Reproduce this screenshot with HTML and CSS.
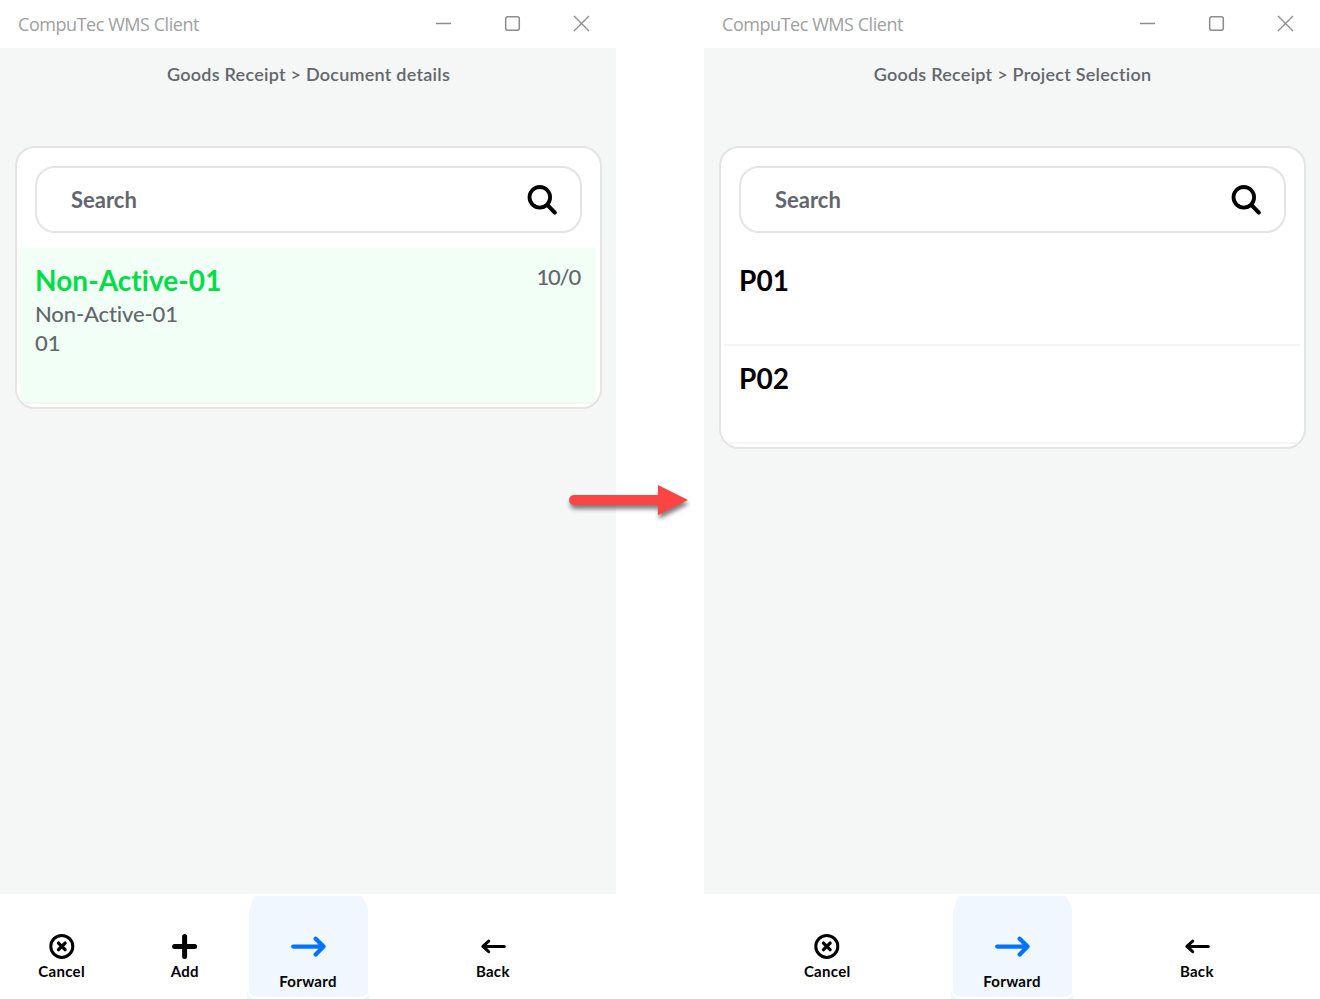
FILE: index.html
```html
<!DOCTYPE html>
<html lang="en">
<head>
<meta charset="utf-8">
<title>CompuTec WMS Client</title>
<link rel="stylesheet" href="styles.css">
</head>
<body>
<svg class="defs" width="0" height="0">
  <symbol id="controls" viewBox="0 0 160 20">
    <g fill="none" stroke="#8c8c8c" stroke-width="1.5"><path d="M1 11.5H16"/><rect x="70.7" y="4.7" width="13.6" height="13.6" rx="2"/><path d="M139 4L154 19M154 4L139 19" stroke-width="1.3"/></g>
  </symbol>
  <symbol id="search" viewBox="0 0 30 30">
    <g fill="none" stroke="#000" stroke-linecap="round"><circle cx="12.8" cy="12.3" r="10.3" stroke-width="3.8"/><path d="M20.8 20.3L27.8 27.6" stroke-width="4"/></g>
  </symbol>
  <symbol id="cancel" viewBox="0 0 26 26">
    <g fill="none" stroke="#000"><circle cx="12.8" cy="13.4" r="11" stroke-width="3"/><path d="M9.5 10.1L16.1 16.7M16.1 10.1L9.5 16.7" stroke-width="3.3" stroke-linecap="round"/></g>
  </symbol>
  <symbol id="add" viewBox="0 0 26 26"><path d="M12.6 3.4V23.4M2.6 13.4H22.6" stroke="#000" stroke-width="5" stroke-linecap="round"/></symbol>
  <symbol id="back" viewBox="0 0 26 26"><path d="M24.3 13.4H3.3M8.7 8.1L2.9 13.4L8.7 18.7" fill="none" stroke="#000" stroke-width="3" stroke-linecap="round" stroke-linejoin="round"/></symbol>
  <symbol id="forward" viewBox="0 0 36 22"><path d="M3.2 10.6H32.7M25.7 2.8L33.5 10.6L25.7 18.4" fill="none" stroke="#0373fb" stroke-width="4.3" stroke-linecap="round" stroke-linejoin="round"/></symbol>
  <symbol id="tab" viewBox="0 0 122 103">
    <path fill="#f0f7ff" d="M9 0H114Q116 0 117 3L121 14V93Q121 101 113 101H10Q2 101 2 93V15L6 3Q7 0 9 0ZM0 95Q2 101 7 103H0ZM123 95Q121 101 116 103H123Z"/>
  </symbol>
</svg>
<main class="stage">
  <section class="window">
    <header class="titlebar"><span class="app-name">CompuTec WMS Client</span><svg class="controls"><use href="#controls"/></svg></header>
    <div class="content">
      <h1 class="path">Goods Receipt &gt; Document details</h1>
      <div class="card">
        <div class="search"><span class="search-label">Search</span><svg class="search-icon"><use href="#search"/></svg></div>
        <article class="item item-selected">
          <div><h2 class="name">Non-Active-01</h2><p class="detail">Non-Active-01</p><p class="detail">01</p></div>
          <span class="quantity">10/0</span>
        </article>
      </div>
    </div>
    <footer class="actions">
      <div class="side"><div class="action"><svg class="icon"><use href="#cancel"/></svg><span>Cancel</span></div><div class="action"><svg class="icon"><use href="#add"/></svg><span>Add</span></div></div>
      <div class="action forward"><svg class="tab"><use href="#tab"/></svg><svg class="forward-icon"><use href="#forward"/></svg><span>Forward</span></div>
      <div class="side"><div class="action"><svg class="icon"><use href="#back"/></svg><span>Back</span></div></div>
    </footer>
  </section>
  <section class="window">
    <header class="titlebar"><span class="app-name">CompuTec WMS Client</span><svg class="controls"><use href="#controls"/></svg></header>
    <div class="content">
      <h1 class="path">Goods Receipt &gt; Project Selection</h1>
      <div class="card">
        <div class="search"><span class="search-label">Search</span><svg class="search-icon"><use href="#search"/></svg></div>
        <article class="item"><h2 class="name">P01</h2></article>
        <article class="item"><h2 class="name">P02</h2></article>
      </div>
    </div>
    <footer class="actions">
      <div class="side"><div class="action"><svg class="icon"><use href="#cancel"/></svg><span>Cancel</span></div></div>
      <div class="action forward"><svg class="tab"><use href="#tab"/></svg><svg class="forward-icon"><use href="#forward"/></svg><span>Forward</span></div>
      <div class="side"><div class="action"><svg class="icon"><use href="#back"/></svg><span>Back</span></div></div>
    </footer>
  </section>
  <svg class="arrow" viewBox="0 0 130 44"><path fill="#fd4444" d="M9 10H93V0L123 15L93 30V20H9A5 5 0 0 1 9 10Z"/></svg>
</main>
</body>
</html>
```

FILE: styles.css
```css
* { box-sizing: border-box; }
body { margin: 0; background: #fff; font-family: Lato, "Noto Sans", sans-serif; font-variant-ligatures: none; overflow: hidden; }
h1, h2, p { margin: 0; }
svg { display: block; flex: none; }
.defs { position: absolute; }
.stage { position: relative; display: flex; gap: 88px; width: 1320px; height: 999px; }
.window { display: flex; flex-direction: column; width: 616px; }
.titlebar { display: flex; justify-content: space-between; height: 48px; padding: 12px 21px 0 18px; }
.app-name { margin-top: -1px; font: 400 18px/26px "Open Sans", sans-serif; letter-spacing: -0.45px; color: #a0a0a0; white-space: nowrap; }
.controls { width: 160px; height: 20px; }
.content { height: 846px; padding: 15px 14px 0 15px; background: #f5f7f6; }
.path { height: 22px; margin-bottom: 61px; font-size: 18px; line-height: 22px; font-weight: 600; letter-spacing: 0.25px; text-align: center; color: #62666d; white-space: nowrap; }
.card { padding: 18px 4px 3px 3px; border: 2px solid #e4e4e4; border-radius: 20px; background: #fff; overflow: hidden; }
.search { display: flex; justify-content: space-between; align-items: center; height: 67px; margin: 0 14px 15px 15px; padding: 0 23px 0 34px; border: 2px solid #e4e4e4; border-radius: 20px; }
.search-label { font-size: 22px; line-height: 28px; font-weight: 700; color: #62666d; }
.search-icon { width: 30px; height: 30px; }
.item { display: flex; justify-content: space-between; height: 98px; padding: 14px 15px 0; border-bottom: 2px solid #f5f5f5; }
.item-selected { height: 156px; background: #f1fff6; }
.name { margin-bottom: 1px; font-size: 28px; line-height: 36px; font-weight: 700; letter-spacing: 0.1px; color: #000; }
.item-selected .name { letter-spacing: 0.05px; color: #00dd46; }
.detail, .quantity { font-size: 22px; line-height: 29px; font-weight: 500; letter-spacing: -0.13px; color: #62666d; }
.quantity { margin-right: 1px; line-height: 30px; letter-spacing: -1.2px; }
.actions { display: flex; height: 105px; }
.side { display: flex; flex: 2; }
.action { display: flex; flex: 1; flex-direction: column; align-items: center; padding-top: 39px; font-size: 15px; line-height: 20px; font-weight: 700; letter-spacing: 0.3px; color: #000; }
.icon { width: 26px; height: 26px; margin-bottom: 2px; }
.forward { position: relative; padding-top: 42px; }
.forward-icon { position: relative; width: 36px; height: 22px; margin-bottom: 13px; }
.forward span { position: relative; }
.tab { position: absolute; left: 1px; top: 2px; width: 122px; height: 103px; }
.arrow { position: absolute; left: 565px; top: 485px; width: 130px; height: 44px; filter: drop-shadow(1px 4px 2px rgba(0, 0, 0, .5)); }
```
